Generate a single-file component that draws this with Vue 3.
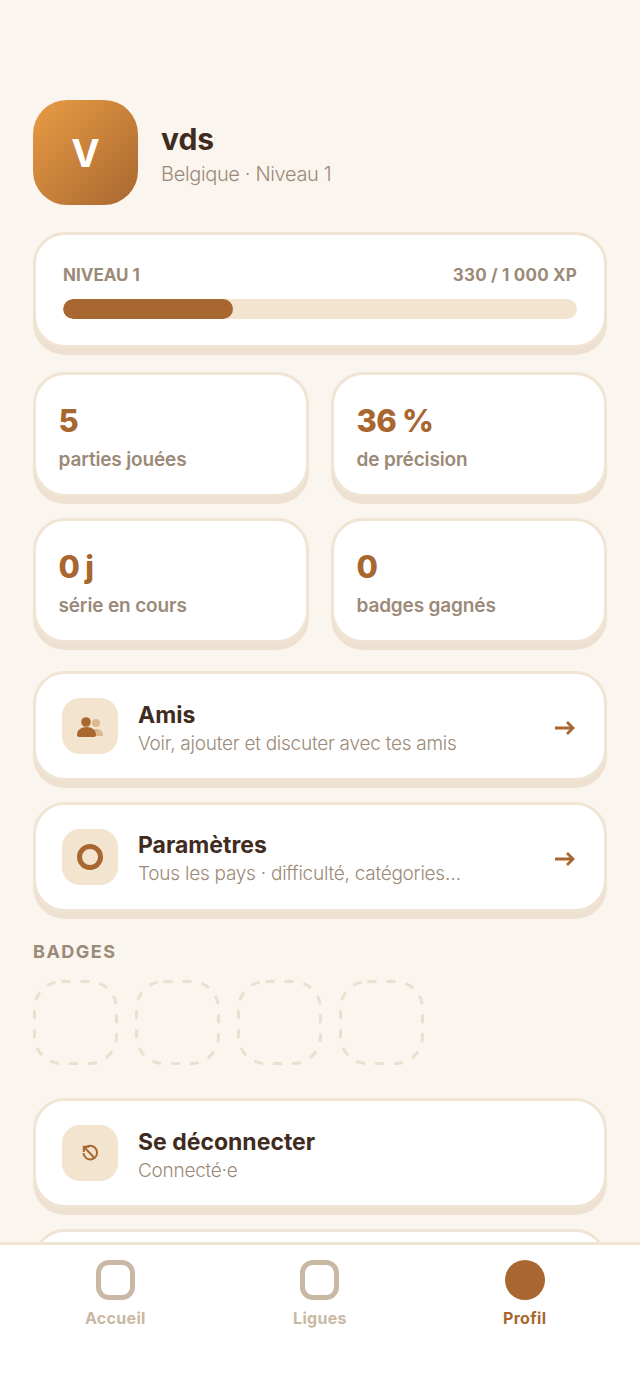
<script setup>
const stats = [
  { value: "5", label: "parties jouées" },
  { value: "36 %", label: "de précision" },
  { value: "0 j", label: "série en cours" },
  { value: "0", label: "badges gagnés" },
];
const badges = [1, 2, 3, 4];
const tabs = [
  { label: "Accueil" },
  { label: "Ligues" },
  { label: "Profil", active: true },
];
</script>

<template>
  <div class="screen">
    <main class="content">
      <header class="profile">
        <div class="avatar">V</div>
        <div class="who">
          <div class="name">vds</div>
          <div class="meta">Belgique · Niveau 1</div>
        </div>
      </header>

      <section class="card level">
        <div class="level-head">
          <span>NIVEAU 1</span>
          <span class="xp">330 / 1 000 XP</span>
        </div>
        <div class="bar"><div class="bar-fill" :style="{ width: '33%' }"></div></div>
      </section>

      <section class="stats">
        <div v-for="s in stats" :key="s.label" class="card stat">
          <div class="stat-value">{{ s.value }}</div>
          <div class="stat-label">{{ s.label }}</div>
        </div>
      </section>

      <div class="card row">
        <div class="row-icon">
          <svg width="28" height="22" viewBox="0 0 28 22">
            <circle cx="20" cy="8" r="4" fill="#dcb88f" />
            <path d="M15 21v-4c1-2 3-3 5-3 4 0 7 2 7 6 0 .6-.4 1-1 1z" fill="#dcb88f" />
            <circle cx="10" cy="7" r="4.800" fill="#a86730" />
            <path d="M1 20c0-5 4-8 9.500-8s9.500 3 9.500 8c0 1-.8 2-2 2H3c-1.200 0-2-1-2-2z" fill="#a86730" />
          </svg>
        </div>
        <div class="row-text">
          <div class="row-title">Amis</div>
          <div class="row-sub">Voir, ajouter et discuter avec tes amis</div>
        </div>
        <svg class="arrow" width="20" height="14" viewBox="0 0 20 14">
          <path d="M0 7h18M12 1l6 6-6 6" fill="none" stroke="#a86730" stroke-width="2.800" />
        </svg>
      </div>

      <div class="card row">
        <div class="row-icon">
          <div class="ring"></div>
        </div>
        <div class="row-text">
          <div class="row-title">Paramètres</div>
          <div class="row-sub">Tous les pays · difficulté, catégories…</div>
        </div>
        <svg class="arrow" width="20" height="14" viewBox="0 0 20 14">
          <path d="M0 7h18M12 1l6 6-6 6" fill="none" stroke="#a86730" stroke-width="2.800" />
        </svg>
      </div>

      <h2 class="section-title">BADGES</h2>
      <div class="badges">
        <svg v-for="b in badges" :key="b" class="badge" width="85" height="85" viewBox="0 0 85 85">
          <rect x="1.500" y="1.500" width="82" height="82" rx="27" fill="none" stroke="#ebdfcf" stroke-width="3" stroke-dasharray="9 10" />
        </svg>
      </div>

      <div class="card row logout">
        <div class="row-icon">
          <svg width="18" height="18" viewBox="0 0 18 18" fill="none" stroke="#a86730" stroke-width="2">
            <path d="M6 2.700A6.800 6.800 0 1 1 2.500 9" />
            <path d="M3.500 3.500l9.500 10M2.800 8V2.800H8" />
          </svg>
        </div>
        <div class="row-text">
          <div class="row-title">Se déconnecter</div>
          <div class="row-sub">Connecté·e</div>
        </div>
      </div>

      <div class="card row"></div>
    </main>

    <nav class="tabbar">
      <div v-for="t in tabs" :key="t.label" class="tab" :class="{ active: t.active }">
        <div class="tab-icon"></div>
        <div class="tab-label">{{ t.label }}</div>
      </div>
    </nav>
  </div>
</template>

<style>
html,
body {
  margin: 0;
  background: #faf5ef;
}
</style>

<style scoped>
.screen {
  position: relative;
  width: 640px;
  height: 1385px;
  overflow: hidden;
  background: #faf5ef;
  font-family: Inter, "Noto Sans", sans-serif;
  color: #3f2c1e;
}
.content {
  padding: 100px 33px 0;
  display: flex;
  flex-direction: column;
}
.profile {
  display: flex;
  align-items: center;
  gap: 23px;
  margin-bottom: 27px;
}
.who {
  padding-top: 6px;
}
.avatar {
  width: 105px;
  height: 105px;
  border-radius: 34px;
  background: linear-gradient(135deg, #e99c44, #a86730);
  color: #fff;
  font-size: 38px;
  font-weight: 700;
  display: flex;
  align-items: center;
  justify-content: center;
}
.name {
  font-size: 30px;
  font-weight: 700;
  line-height: 36px;
}
.meta {
  font-size: 20px;
  font-weight: 300;
  color: #9c8a78;
  line-height: 32px;
  margin-top: 1px;
  letter-spacing: -0.35px;
}
.card {
  box-sizing: border-box;
  background: #fff;
  border: 3px solid #f0e4d4;
  border-radius: 32px;
  box-shadow: 0 7px 0 #eee1d1;
}
.level {
  height: 116px;
  padding: 28px 27px 0;
  margin-bottom: 24px;
}
.level-head {
  display: flex;
  justify-content: space-between;
  font-size: 17px;
  font-weight: 700;
  line-height: 24px;
  color: #9c8a78;
}
.xp {
  letter-spacing: 0.2px;
}
.bar {
  height: 20px;
  margin-top: 12px;
  border-radius: 10px;
  background: #f3e4cf;
  overflow: hidden;
}
.bar-fill {
  height: 100%;
  border-radius: 10px;
  background: #a86730;
}
.stats {
  display: grid;
  grid-template-columns: 1fr 1fr;
  column-gap: 22px;
  row-gap: 21px;
  margin-bottom: 28px;
}
.stat {
  height: 125px;
  padding: 26px 22.500px 0;
}
.stat-value {
  font-size: 31px;
  font-weight: 800;
  line-height: 40px;
  letter-spacing: -0.7px;
  color: #a86730;
}
.stat-label {
  font-size: 19px;
  font-weight: 600;
  line-height: 26px;
  margin-top: 6px;
  letter-spacing: -0.15px;
  color: #9c8a78;
}
.row {
  height: 110px;
  padding: 0 26px;
  display: flex;
  align-items: center;
  gap: 20px;
  margin-bottom: 20.500px;
  flex-shrink: 0;
}
.row-icon {
  width: 56px;
  height: 56px;
  border-radius: 18px;
  background: #f3e4cf;
  display: flex;
  align-items: center;
  justify-content: center;
  flex-shrink: 0;
}
.ring {
  width: 26px;
  height: 26px;
  box-sizing: border-box;
  border: 5px solid #a86730;
  border-radius: 50%;
}
.row-text {
  flex: 1;
  min-width: 0;
  padding-top: 5px;
}
.row-title {
  font-size: 23px;
  font-weight: 700;
  line-height: 28px;
}
.row-sub {
  font-size: 19px;
  font-weight: 300;
  color: #9c8a78;
  line-height: 26px;
  margin-top: 2px;
  letter-spacing: -0.25px;
}
.arrow {
  margin-right: 3px;
  margin-top: 4px;
}
.section-title {
  margin: 8px 0 0;
  font-size: 18px;
  font-weight: 700;
  letter-spacing: 1.5px;
  line-height: 24px;
  color: #9c8a78;
}
.badges {
  display: flex;
  gap: 17px;
  margin-top: 16px;
  margin-bottom: 33px;
}
.tabbar {
  position: absolute;
  left: 0;
  right: 0;
  top: 1242px;
  bottom: 0;
  box-sizing: border-box;
  background: #fff;
  border-top: 3px solid #f0e4d4;
  display: grid;
  grid-template-columns: repeat(3, 1fr);
  padding: 15px 13px 0;
}
.tab {
  display: flex;
  flex-direction: column;
  align-items: center;
  color: #c9b8a4;
}
.tab-icon {
  width: 39px;
  height: 40px;
  box-sizing: border-box;
  border: 5px solid #c9b8a4;
  border-radius: 13px;
}
.tab-label {
  margin-top: 7px;
  font-size: 16px;
  font-weight: 700;
  line-height: 22px;
  letter-spacing: 0.3px;
}
.tab.active {
  color: #a86730;
}
.tab.active .tab-icon {
  width: 40px;
  border: none;
  border-radius: 50%;
  background: #a86730;
}
</style>
